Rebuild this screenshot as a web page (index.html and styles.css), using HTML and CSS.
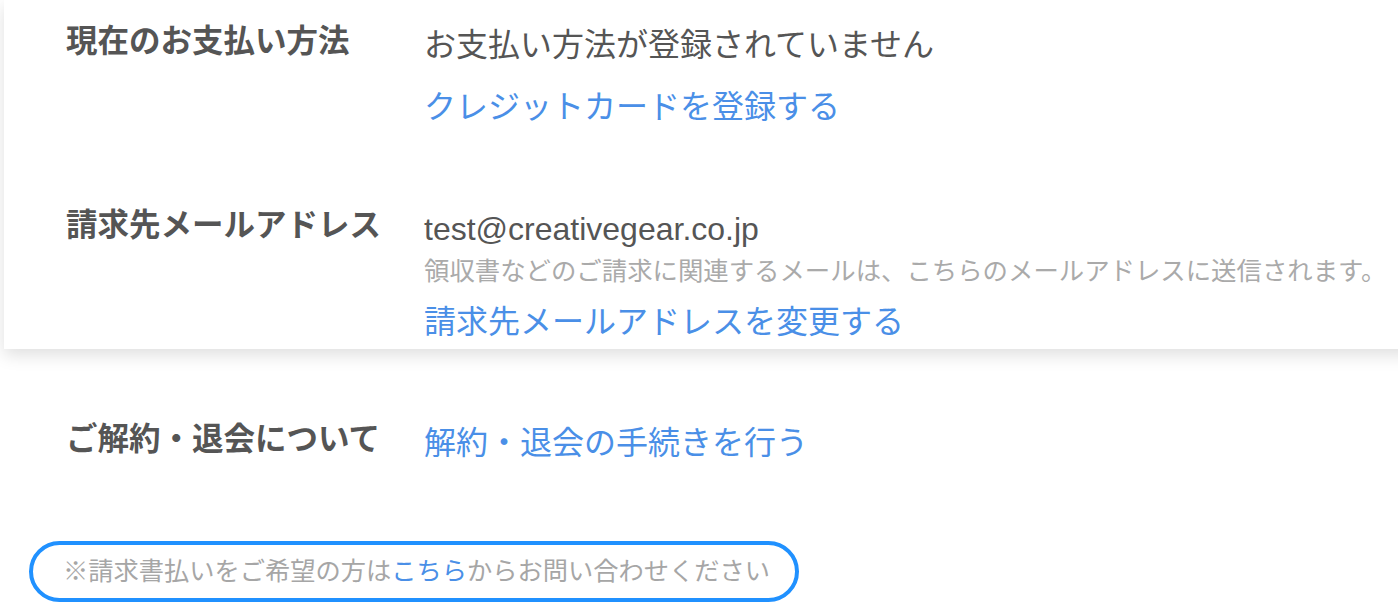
FILE: index.html
```html
<!DOCTYPE html>
<html>
<head>
    <meta charset="utf-8">
    <link rel="stylesheet" href="styles.css">
</head>
<body>
    <div class="card">
        <div class="row">
            <div class="label">現在のお支払い方法</div>
            <div class="value">
                <p class="text first">お支払い方法が登録されていません</p>
                <a class="link" href="#">クレジットカードを登録する</a>
            </div>
        </div>

        <div class="row second">
            <div class="label">請求先メールアドレス</div>
            <div class="value">
                <p class="text">test@creativegear.co.jp</p>
                <p class="note">領収書などのご請求に関連するメールは、こちらのメールアドレスに送信されます。</p>
                <a class="link" href="#">請求先メールアドレスを変更する</a>
            </div>
        </div>
    </div>

    <div class="row cancel">
        <div class="label">ご解約・退会について</div>
        <div class="value">
            <a class="link" href="#">解約・退会の手続きを行う</a>
        </div>
    </div>

    <div class="footer">
        <p class="invoice">※請求書払いをご希望の方は<a href="#">こちら</a>からお問い合わせください</p>
    </div>
</body>
</html>
```

FILE: styles.css
```css
html, body {
    overflow-x: hidden;
}
body {
    margin: 0;
    background: #fff;
    font-family: "Liberation Sans", "Noto Sans CJK JP", sans-serif;
    color: #555;
}
.card {
    background: #fff;
    margin: 0 -40px 0 4px;
    padding: 21px 0 3px 62px;
    box-shadow: 0 6px 16px rgba(0, 0, 0, 0.13);
}
.row {
    display: grid;
    grid-template-columns: 358px 1fr;
    align-items: start;
}
.row.second {
    margin-top: 74px;
}
.row.cancel {
    margin-top: 70px;
    padding-left: 66px;
}
.label {
    font-size: 31.5px;
    line-height: 40px;
    font-weight: bold;
    color: #555;
    white-space: nowrap;
}
.value {
    display: flex;
    flex-direction: column;
    align-items: flex-start;
}
.text {
    margin: 0;
    font-size: 32px;
    line-height: 48px;
    color: #555;
}
.text.first {
    margin-bottom: 14px;
}
.note {
    margin: 0 0 9px;
    font-size: 25.4px;
    line-height: 36px;
    color: #aaa;
    white-space: nowrap;
}
.link {
    font-size: 32px;
    line-height: 48px;
    color: #4a8fe7;
    text-decoration: none;
}
.footer {
    margin-top: 74px;
    padding-left: 29px;
}
.invoice {
    display: inline-block;
    margin: 0;
    padding: 0 25px 0 30px;
    border: 4px solid #2091ff;
    border-radius: 40px;
    font-size: 25.25px;
    line-height: 53px;
    color: #a6a6a6;
    white-space: nowrap;
}
.invoice a {
    color: #4a8fe7;
    text-decoration: none;
}
```
